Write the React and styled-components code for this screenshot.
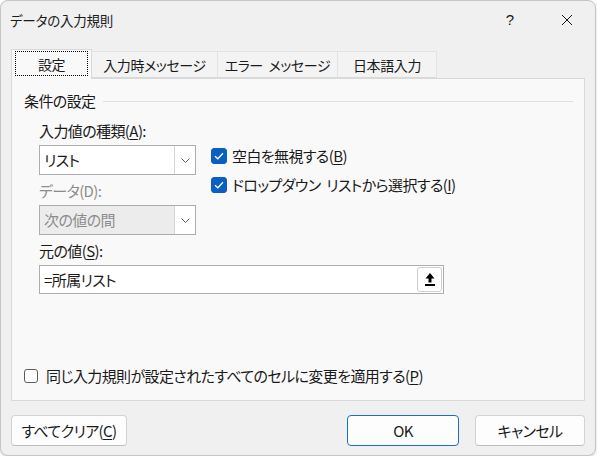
import React from 'react'
import styled, { createGlobalStyle } from 'styled-components'

const GlobalStyle = createGlobalStyle`
  html, body {
    margin: 0;
    padding: 0;
    background: #ffffff;
  }
  body {
    font-family: "Noto Sans CJK JP", "Noto Sans", sans-serif;
    font-size: 15px;
    line-height: 20px;
    color: #1a1a1a;
    font-feature-settings: "palt";
    letter-spacing: -0.6px;
    word-spacing: 3px;
  }
  * { box-sizing: border-box; }
`

const Window = styled.div`
  width: 596px;
  height: 456px;
  background: #f0f0f0;
  border: 1px solid #c6c6c6;
  border-radius: 8px;
  box-shadow: 0 1px 3px rgba(0, 0, 0, 0.18);
  display: flex;
  flex-direction: column;
  overflow: hidden;
`

const TitleBar = styled.div`
  height: 37px;
  display: flex;
  align-items: center;
  padding-left: 9px;
`

const Title = styled.span`
  flex: 1;
  font-size: 13.5px;
  letter-spacing: -0.2px;
`

const CaptionButton = styled.div`
  width: 57px;
  height: 37px;
  display: flex;
  align-items: center;
  justify-content: center;
  font-family: "Liberation Sans", sans-serif;
  font-size: 15px;
  color: #1a1a1a;
`

const Body = styled.div`
  flex: 1;
  display: flex;
  flex-direction: column;
  padding: 0 10px;
`

const TabRow = styled.div`
  height: 40px;
  display: flex;
  align-items: flex-end;
  font-size: 14px;
  letter-spacing: -0.4px;
`

const Tab = styled.div`
  position: relative;
  width: ${p => p.$w}px;
  height: ${p => (p.$active ? 30 : 27)}px;
  margin-bottom: ${p => (p.$active ? -1 : 0)}px;
  z-index: ${p => (p.$active ? 2 : 0)};
  display: flex;
  padding: ${p => (p.$active ? '1px 3px 3px' : '0')};
  background: ${p => (p.$active ? '#f9f9f9' : '#f3f3f3')};
  border: 1px solid ${p => (p.$active ? '#d9d9d9' : '#e3e3e3')};
  border-bottom: ${p => (p.$active ? 'none' : '1px solid #d9d9d9')};
  border-left-width: ${p => (p.$first ? 1 : 0)}px;
`

const TabLabel = styled.span`
  flex: 1;
  display: flex;
  align-items: center;
  justify-content: center;
  border: 1px dotted ${p => (p.$focus ? '#000' : 'transparent')};
  white-space: nowrap;
`

const Panel = styled.div`
  height: 323px;
  background: #f9f9f9;
  border: 1px solid #d9d9d9;
  display: flex;
  flex-direction: column;
  padding: 12px 11px 13px 12px;
`

const GroupHeader = styled.div`
  display: flex;
  align-items: center;
  gap: 8px;
  &::after {
    content: '';
    flex: 1;
    height: 1px;
    background: #e0e0e0;
  }
`

const Group = styled.div`
  padding-left: 15px;
  margin-top: 10px;
`

const Columns = styled.div`
  display: flex;
  gap: 15px;
`

const LeftCol = styled.div`
  width: 157px;
  display: flex;
  flex-direction: column;
`

const RightCol = styled.div`
  padding-top: 24px;
  display: flex;
  flex-direction: column;
  gap: 7px;
`

const FieldLabel = styled.div`
  margin-top: ${p => p.$gap || 0}px;
  margin-bottom: 4px;
  color: ${p => (p.$disabled ? '#8c8c8c' : '#1a1a1a')};
  white-space: nowrap;
`

const Key = styled.span`
  text-decoration: ${p => (p.$plain ? 'none' : 'underline')};
  text-underline-offset: 2px;
  text-decoration-thickness: 1px;
`

const Select = styled.div`
  height: 30px;
  display: flex;
  border: 1px solid #adadad;
  background: ${p => (p.$disabled ? '#ececec' : '#ffffff')};
  color: ${p => (p.$disabled ? '#8c8c8c' : '#1a1a1a')};
`

const SelectValue = styled.span`
  flex: 1;
  display: flex;
  align-items: center;
  padding-left: 4px;
`

const SelectArrow = styled.span`
  width: 21px;
  display: flex;
  align-items: center;
  justify-content: center;
  background: #ffffff;
  border-left: 1px solid #d6d6d6;
`

const CheckRow = styled.label`
  height: 22px;
  display: flex;
  align-items: center;
  gap: ${p => p.$gap || 5}px;
  white-space: nowrap;
`

const CheckText = styled.span``

const Box = styled.span`
  width: ${p => p.$size}px;
  height: ${p => p.$size}px;
  border-radius: 3px;
  display: flex;
  align-items: center;
  justify-content: center;
  background: ${p => (p.$checked ? '#0a5fc2' : '#ffffff')};
  border: 1px solid ${p => (p.$checked ? '#0a5fc2' : '#5c5c5c')};
`

const SourceField = styled.div`
  width: 405px;
  height: 29px;
  display: flex;
  align-items: center;
  background: #ffffff;
  border: 1px solid #adadad;
  padding: 0 1px 0 4px;
`

const SourceText = styled.span`
  flex: 1;
`

const CollapseButton = styled.span`
  width: 25px;
  height: 25px;
  display: flex;
  align-items: center;
  justify-content: center;
  background: #ffffff;
  border: 1px solid #cfcfcf;
  border-radius: 3px;
`

const ApplyRow = styled.div`
  margin-top: auto;
`

const Footer = styled.div`
  display: flex;
  align-items: center;
  padding-top: 14px;
  gap: 16px;
`

const Button = styled.div`
  width: ${p => p.$w}px;
  height: 31px;
  display: flex;
  align-items: center;
  justify-content: center;
  margin-right: ${p => (p.$push ? 'auto' : '0')};
  background: #fdfdfd;
  border: 1px solid ${p => (p.$default ? '#1b6fc8' : '#d3d3d3')};
  border-bottom-color: ${p => (p.$default ? '#1b6fc8' : '#bdbdbd')};
  border-radius: 4px;
  white-space: nowrap;
`

const Chevron = () => (
  <svg width="9" height="5" viewBox="0 0 9 5">
    <polyline points="0.5,0.5 4.5,4.5 8.5,0.5" fill="none" stroke="#5a5a5a" strokeWidth="1" />
  </svg>
)

const Tick = () => (
  <svg width="10" height="8" viewBox="0 0 10 8">
    <polyline points="1,4.2 3.8,6.8 9,1.2" fill="none" stroke="#ffffff" strokeWidth="1.3" />
  </svg>
)

const CloseGlyph = () => (
  <svg width="12" height="12" viewBox="0 0 12 12">
    <path d="M1 1 L11 11 M11 1 L1 11" stroke="#1a1a1a" strokeWidth="1" />
  </svg>
)

const CollapseGlyph = () => (
  <svg width="12" height="15" viewBox="0 0 12 15">
    <path d="M6 1 L10.5 6.5 H7.5 V10.5 H4.5 V6.5 H1.5 Z" fill="#000" />
    <rect x="1" y="12" width="10" height="2" fill="#000" />
  </svg>
)

const tabs = [
  { label: '設定', w: 81 },
  { label: '入力時メッセージ', w: 126 },
  { label: 'エラー メッセージ', w: 120 },
  { label: '日本語入力', w: 99 },
]

export default function App() {
  return (
    <>
      <GlobalStyle />
      <Window>
        <TitleBar>
          <Title>データの入力規則</Title>
          <CaptionButton>?</CaptionButton>
          <CaptionButton><CloseGlyph /></CaptionButton>
        </TitleBar>
        <Body>
          <TabRow>
            {tabs.map((t, i) => (
              <Tab key={t.label} $w={t.w} $active={i === 0} $first={i === 0}>
                <TabLabel $focus={i === 0}>{t.label}</TabLabel>
              </Tab>
            ))}
          </TabRow>
          <Panel>
            <GroupHeader>条件の設定</GroupHeader>
            <Group>
              <Columns>
                <LeftCol>
                  <FieldLabel>入力値の種類(<Key>A</Key>):</FieldLabel>
                  <Select>
                    <SelectValue>リスト</SelectValue>
                    <SelectArrow><Chevron /></SelectArrow>
                  </Select>
                  <FieldLabel $gap={6} $disabled>データ(<Key $plain>D</Key>):</FieldLabel>
                  <Select $disabled>
                    <SelectValue>次の値の間</SelectValue>
                    <SelectArrow><Chevron /></SelectArrow>
                  </Select>
                </LeftCol>
                <RightCol>
                  <CheckRow>
                    <Box $size={16} $checked><Tick /></Box>
                    <CheckText>空白を無視する(<Key>B</Key>)</CheckText>
                  </CheckRow>
                  <CheckRow>
                    <Box $size={16} $checked><Tick /></Box>
                    <CheckText>ドロップダウン リストから選択する(<Key>I</Key>)</CheckText>
                  </CheckRow>
                </RightCol>
              </Columns>
              <FieldLabel $gap={6}>元の値(<Key>S</Key>):</FieldLabel>
              <SourceField>
                <SourceText>=所属リスト</SourceText>
                <CollapseButton><CollapseGlyph /></CollapseButton>
              </SourceField>
            </Group>
            <ApplyRow>
              <CheckRow $gap={8}>
                <Box $size={14} />
                <CheckText>同じ入力規則が設定されたすべてのセルに変更を適用する(<Key>P</Key>)</CheckText>
              </CheckRow>
            </ApplyRow>
          </Panel>
          <Footer>
            <Button $w={116} $push><CheckText>すべてクリア(<Key>C</Key>)</CheckText></Button>
            <Button $w={112} $default>OK</Button>
            <Button $w={110}>キャンセル</Button>
          </Footer>
        </Body>
      </Window>
    </>
  )
}
